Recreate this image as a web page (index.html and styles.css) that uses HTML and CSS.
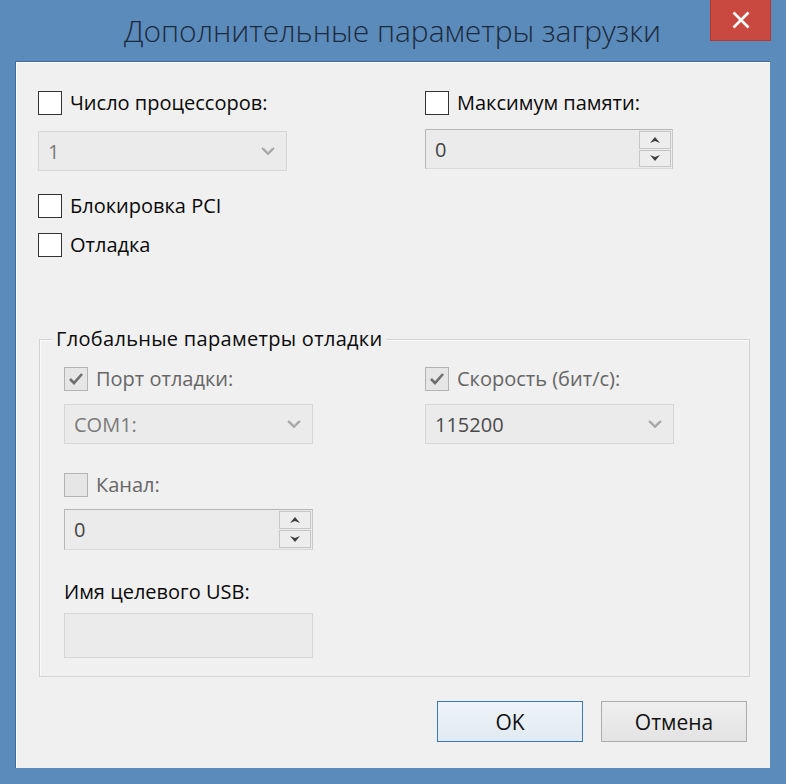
FILE: index.html
```html
<!DOCTYPE html>
<html lang="ru">
<head>
<meta charset="utf-8">
<title>Дополнительные параметры загрузки</title>
<link rel="stylesheet" href="styles.css">
</head>
<body>
<div class="window">
  <div class="titlebar">
    <div class="spacer"></div>
    <div class="title">Дополнительные параметры загрузки</div>
    <div class="close">
      <svg width="20" height="18" viewBox="0 0 20 18"><path d="M2.5 1.5 L17.5 16.5 M17.5 1.5 L2.5 16.5" stroke="#fff" stroke-width="2.6" fill="none"/></svg>
    </div>
  </div>
  <div class="content">
    <div class="top-grid">
      <div class="col">
        <label class="check-row"><span class="cb"></span><span class="lbl">Число процессоров:</span></label>
        <div class="combo combo-top"><span class="val">1</span>
          <svg class="chev" width="14" height="9" viewBox="0 0 14 9"><path d="M1 1 L7 7 L13 1" stroke="#a3a3a3" stroke-width="1.8" fill="none"/><path d="M3 1 L7 5 L11 1" stroke="#c8c8c8" stroke-width="1" fill="none"/></svg>
        </div>
        <label class="check-row row-pci"><span class="cb"></span><span class="lbl">Блокировка PCI</span></label>
        <label class="check-row row-dbg"><span class="cb"></span><span class="lbl">Отладка</span></label>
      </div>
      <div class="col">
        <label class="check-row"><span class="cb"></span><span class="lbl">Максимум памяти:</span></label>
        <div class="spin spin-top"><span class="val">0</span>
          <div class="spin-btns">
            <div class="sbtn"><svg width="10" height="6" viewBox="0 0 10 6"><path d="M0 6 L5 0 L10 6 L5 4 Z" fill="#3d3d3d"/></svg></div>
            <div class="sbtn"><svg width="10" height="6" viewBox="0 0 10 6"><path d="M0 0 L5 2 L10 0 L5 6 Z" fill="#3d3d3d"/></svg></div>
          </div>
        </div>
      </div>
    </div>

    <div class="group">
      <div class="group-title">Глобальные параметры отладки</div>
      <div class="group-grid">
        <div class="col">
          <label class="check-row disabled"><span class="cb cb-dis">
            <svg width="18" height="16" viewBox="0 0 18 16"><path d="M3 8 L7 12 L15 3" stroke="#6f6f6f" stroke-width="2.6" fill="none"/></svg>
          </span><span class="lbl">Порт отладки:</span></label>
          <div class="combo combo-g"><span class="val">COM1:</span>
            <svg class="chev" width="14" height="9" viewBox="0 0 14 9"><path d="M1 1 L7 7 L13 1" stroke="#a3a3a3" stroke-width="1.8" fill="none"/><path d="M3 1 L7 5 L11 1" stroke="#c8c8c8" stroke-width="1" fill="none"/></svg>
          </div>
          <label class="check-row disabled row-chan"><span class="cb cb-dis"></span><span class="lbl">Канал:</span></label>
          <div class="spin spin-g"><span class="val">0</span>
            <div class="spin-btns">
              <div class="sbtn"><svg width="10" height="6" viewBox="0 0 10 6"><path d="M0 6 L5 0 L10 6 L5 4 Z" fill="#3d3d3d"/></svg></div>
              <div class="sbtn"><svg width="10" height="6" viewBox="0 0 10 6"><path d="M0 0 L5 2 L10 0 L5 6 Z" fill="#3d3d3d"/></svg></div>
            </div>
          </div>
          <div class="field-label">Имя целевого USB:</div>
          <div class="textbox"></div>
        </div>
        <div class="col">
          <label class="check-row disabled"><span class="cb cb-dis">
            <svg width="18" height="16" viewBox="0 0 18 16"><path d="M3 8 L7 12 L15 3" stroke="#6f6f6f" stroke-width="2.6" fill="none"/></svg>
          </span><span class="lbl">Скорость (бит/с):</span></label>
          <div class="combo combo-g"><span class="val dark">115200</span>
            <svg class="chev" width="14" height="9" viewBox="0 0 14 9"><path d="M1 1 L7 7 L13 1" stroke="#a3a3a3" stroke-width="1.8" fill="none"/><path d="M3 1 L7 5 L11 1" stroke="#c8c8c8" stroke-width="1" fill="none"/></svg>
          </div>
        </div>
      </div>
    </div>

    <div class="buttons">
      <button class="btn btn-default">OK</button>
      <button class="btn">Отмена</button>
    </div>
  </div>
</div>
</body>
</html>
```
FILE: styles.css
```css
* { box-sizing: border-box; }
html, body { margin: 0; padding: 0; }
body {
  width: 786px;
  height: 784px;
  overflow: hidden;
  font-family: "Open Sans", "Noto Sans", "DejaVu Sans", sans-serif;
}
.window {
  width: 786px;
  height: 784px;
  background: #5b8bba;
  padding: 0 16px 16px 15px;
  display: flex;
  flex-direction: column;
}
.titlebar {
  height: 61px;
  display: grid;
  grid-template-columns: 1fr auto 1fr;
  align-items: start;
}
.title {
  font-size: 30px;
  font-weight: 300;
  color: #1b2a3c;
  line-height: 32px;
  padding-top: 15px;
  white-space: nowrap;
}
.close {
  justify-self: end;
  margin-right: -1px;
  width: 61px;
  height: 41px;
  background: #c9483f;
  border: 1px solid #b43b34;
  border-top: none;
  display: flex;
  align-items: center;
  justify-content: center;
}
.content {
  flex: 1;
  background: #f0f0f0;
  border-top: 1px solid #3f6e9c;
  border-left: 1px solid #3f6e9c;
  box-shadow: inset 1px 1px 0 #ffffff;
  padding: 29px 23px 0 22px;
  display: flex;
  flex-direction: column;
  color: #000;
  font-size: 20px;
}
.top-grid {
  display: grid;
  grid-template-columns: 387px 248px;
}
.col { display: flex; flex-direction: column; }
.check-row {
  display: flex;
  align-items: center;
  gap: 8px;
  height: 24px;
  white-space: nowrap;
}
.cb {
  width: 24px;
  height: 24px;
  flex: none;
  border: 1px solid #333;
  background: #fff;
  display: flex;
  align-items: center;
  justify-content: center;
}
.cb-dis { background: #e6e6e6; border-color: #b3b3b3; }
.lbl { color: #0a0a0a; line-height: 24px; }
.disabled .lbl { color: #666; }
.combo {
  height: 40px;
  width: 249px;
  border: 1px solid #d6d6d6;
  background: #ebebeb;
  display: flex;
  align-items: center;
  justify-content: space-between;
  padding: 0 11px 0 9px;
}
.combo .val { color: #7a7a7a; }
.combo .val.dark { color: #4a4a4a; }
.combo-top { margin-top: 16px; }
.row-pci { margin-top: 23px; }
.row-dbg { margin-top: 15px; }
.spin {
  height: 40px;
  width: 248px;
  border: 1px solid #b5b5b5;
  border-bottom-color: #d8d8d8;
  border-right-color: #c8c8c8;
  background: #ebebeb;
  display: flex;
  align-items: center;
  justify-content: space-between;
  padding: 0 1px 0 9px;
}
.spin .val { color: #444; }
.spin-top { margin-top: 14px; }
.spin-btns {
  width: 32px;
  height: 36px;
  display: flex;
  flex-direction: column;
  gap: 1px;
}
.sbtn {
  flex: 1;
  border: 1px solid #c6c6c6;
  background: #ededed;
  display: flex;
  align-items: center;
  justify-content: center;
}
.group {
  margin-top: 82px;
  margin-left: 1px;
  width: 711px;
  border: 1px solid #d3d3d3;
  box-shadow: inset 1px 1px 0 #fafafa;
  padding: 0 0 18px 24px;
}
.group-title {
  margin: -14px 0 0 -12px;
  padding: 0 4px;
  width: fit-content;
  background: #f0f0f0;
  line-height: 26px;
  color: #0a0a0a;
  letter-spacing: 0.3px;
}
.group-grid {
  margin-top: 15px;
  display: grid;
  grid-template-columns: 361px 249px;
}
.combo-g { margin-top: 13px; }
.row-chan { margin-top: 29px; }
.spin-g { margin-top: 12px; width: 249px; height: 41px; }
.spin-g .spin-btns { height: 37px; }
.field-label {
  margin-top: 29px;
  line-height: 26px;
  color: #0a0a0a;
  white-space: nowrap;
}
.textbox {
  margin-top: 8px;
  width: 249px;
  height: 45px;
  border: 1px solid #d6d6d6;
  background: #ebebeb;
}
.buttons {
  margin-top: 24px;
  display: flex;
  justify-content: flex-end;
  gap: 18px;
}
.btn {
  width: 146px;
  height: 41px;
  font-family: inherit;
  font-size: 21px;
  color: #111;
  border: 1px solid #acacac;
  background: linear-gradient(#efefef, #e3e3e3);
  padding: 0;
  margin: 0;
}
.btn-default {
  border-color: #3a7ab0;
  background: linear-gradient(#eef4f9, #e1eaf2);
}
```
